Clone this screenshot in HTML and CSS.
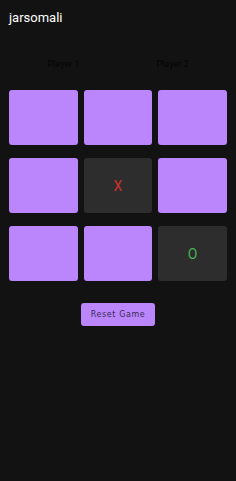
FILE: index.html
```html
<!DOCTYPE html>
<html lang="en">
<head>
  <meta charset="UTF-8" />
  <meta name="viewport" content="width=device-width, initial-scale=1.0" />
  <title>jarsomali</title>
  <link rel="stylesheet" href="styles.css">
</head>
<body>
  <h1 class="title">jarsomali</h1>

  <div class="players">
    <div class="player">Player 1</div>
    <div class="player">Player 2</div>
  </div>

  <div class="board">
    <div class="cell"></div>
    <div class="cell"></div>
    <div class="cell"></div>
    <div class="cell"></div>
    <div class="cell taken x">X</div>
    <div class="cell"></div>
    <div class="cell"></div>
    <div class="cell"></div>
    <div class="cell taken o">O</div>
  </div>

  <div class="actions">
    <button class="reset">Reset Game</button>
  </div>
</body>
</html>
```

FILE: styles.css
```css
body {
  margin: 0;
  padding: 0 9px;
  background: #121212;
  font-family: Roboto, "Noto Sans", sans-serif;
  color: #fff;
}
.title {
  margin: 0;
  padding-top: 10px;
  font-size: 13px;
  font-weight: normal;
  line-height: 15px;
}
.players {
  display: flex;
  margin-top: 34px;
  height: 10px;
}
.player {
  flex: 1;
  text-align: center;
  font-size: 9px;
  line-height: 10px;
  color: #050505;
}
.board {
  display: grid;
  grid-template-columns: repeat(3, 1fr);
  grid-auto-rows: 55px;
  column-gap: 6px;
  row-gap: 13px;
  margin-top: 21px;
}
.cell {
  background: #bb86fc;
  border-radius: 3px;
  display: flex;
  align-items: center;
  justify-content: center;
  font-size: 14px;
}
.cell.taken {
  background: #2d2d2d;
}
.cell.x {
  color: #d32f2f;
}
.cell.o {
  color: #4caf50;
}
.actions {
  display: flex;
  justify-content: center;
  margin-top: 22px;
}
.reset {
  width: 74px;
  height: 23px;
  padding: 0;
  border: none;
  border-radius: 3px;
  background: #bb86fc;
  color: #3a2a55;
  font-family: "DejaVu Sans", sans-serif;
  font-size: 8px;
  letter-spacing: 0.6px;
  cursor: pointer;
}
```
